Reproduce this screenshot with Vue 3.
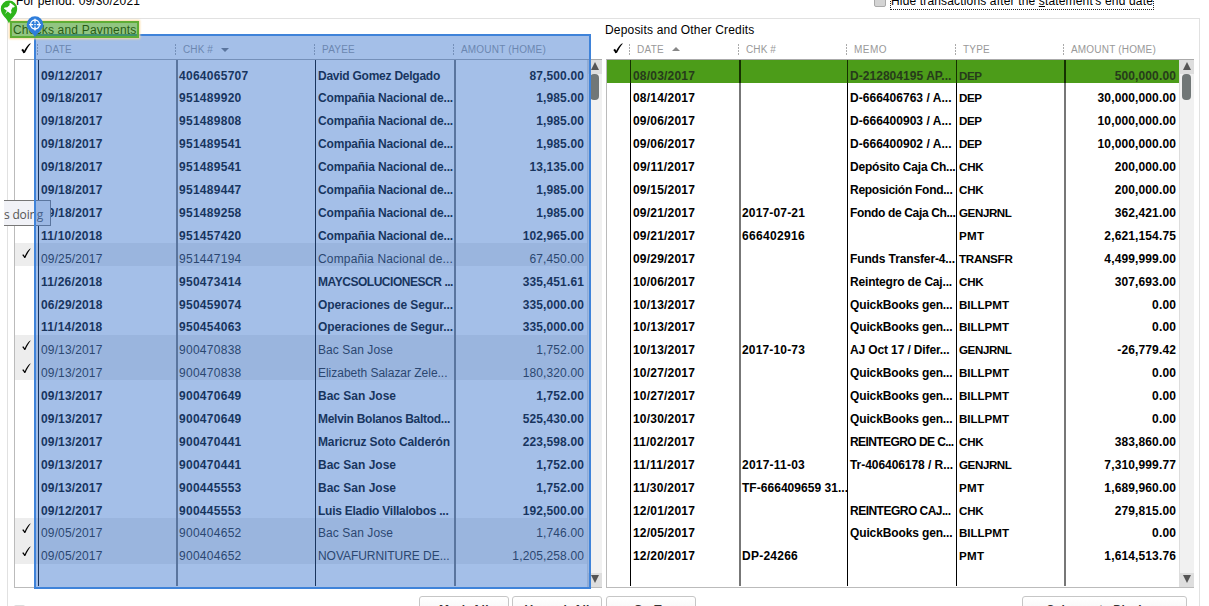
<script setup>
const fit = (el, { value }) => {
  if (!value || !el.textContent) return
  el.style.letterSpacing = '0px'
  const natural = el.getBoundingClientRect().width
  el.style.letterSpacing = (value - natural) / el.textContent.length + 'px'
}
const vFit = { mounted: fit }

// Each text column carries [text, width in px]
const payees = {
  david: ['David Gomez Delgado', 122],
  comp: ['Compañia Nacional de...', 135],
  mayc: ['MAYCSOLUCIONESCR ...', 135],
  oper: ['Operaciones de Segur...', 135],
  bac: ['Bac San Jose', 78],
  bacLight: ['Bac San Jose', 75],
  eliz: ['Elizabeth Salazar Zele...', 129.5],
  melvin: ['Melvin Bolanos Baltod...', 132],
  mari: ['Maricruz Soto Calderón', 132],
  luis: ['Luis Eladio Villalobos ...', 130.5],
  nova: ['NOVAFURNITURE DE...', 131.5],
}
const checks = [
  ['09/12/2017', '4064065707', 'david', '87,500.00'],
  ['09/18/2017', '951489920', 'comp', '1,985.00'],
  ['09/18/2017', '951489808', 'comp', '1,985.00'],
  ['09/18/2017', '951489541', 'comp', '1,985.00'],
  ['09/18/2017', '951489541', 'comp', '13,135.00'],
  ['09/18/2017', '951489447', 'comp', '1,985.00'],
  ['09/18/2017', '951489258', 'comp', '1,985.00'],
  ['11/10/2018', '951457420', 'comp', '102,965.00'],
  ['09/25/2017', '951447194', 'comp', '67,450.00', true],
  ['11/26/2018', '950473414', 'mayc', '335,451.61'],
  ['06/29/2018', '950459074', 'oper', '335,000.00'],
  ['11/14/2018', '950454063', 'oper', '335,000.00'],
  ['09/13/2017', '900470838', 'bacLight', '1,752.00', true],
  ['09/13/2017', '900470838', 'eliz', '180,320.00', true],
  ['09/13/2017', '900470649', 'bac', '1,752.00'],
  ['09/13/2017', '900470649', 'melvin', '525,430.00'],
  ['09/13/2017', '900470441', 'mari', '223,598.00'],
  ['09/13/2017', '900470441', 'bac', '1,752.00'],
  ['09/13/2017', '900445553', 'bac', '1,752.00'],
  ['09/12/2017', '900445553', 'luis', '192,500.00'],
  ['09/05/2017', '900404652', 'bacLight', '1,746.00', true],
  ['09/05/2017', '900404652', 'nova', '1,205,258.00', true],
].map(([date, chk, payee, amount, cleared]) => ({
  cleared,
  cells: [[date, 61.5], [chk, chk.length * 6.95], payees[payee]],
  amount,
}))

const typeWidth = { DEP: 22.5, CHK: 24.5, GENJRNL: 52.5, PMT: 25.5, TRANSFR: 53.5, BILLPMT: 50 }
const deposits = [
  ['08/03/2017', '', 0, 'D-212804195 AP...', 101.5, 'DEP', '500,000.00', true],
  ['08/14/2017', '', 0, 'D-666406763 / A...', 101.5, 'DEP', '30,000,000.00'],
  ['09/06/2017', '', 0, 'D-666400903 / A...', 101.5, 'DEP', '10,000,000.00'],
  ['09/06/2017', '', 0, 'D-666400902 / A...', 101.5, 'DEP', '10,000,000.00'],
  ['09/11/2017', '', 0, 'Depósito Caja Ch...', 105.5, 'CHK', '200,000.00'],
  ['09/15/2017', '', 0, 'Reposición Fond...', 102.5, 'CHK', '200,000.00'],
  ['09/21/2017', '2017-07-21', 63, 'Fondo de Caja Ch...', 105.5, 'GENJRNL', '362,421.00'],
  ['09/21/2017', '666402916', 63, '', 0, 'PMT', '2,621,154.75'],
  ['09/29/2017', '', 0, 'Funds Transfer-4...', 105, 'TRANSFR', '4,499,999.00'],
  ['10/06/2017', '', 0, 'Reintegro de Caj...', 102, 'CHK', '307,693.00'],
  ['10/13/2017', '', 0, 'QuickBooks gen...', 102.5, 'BILLPMT', '0.00'],
  ['10/13/2017', '', 0, 'QuickBooks gen...', 102.5, 'BILLPMT', '0.00'],
  ['10/13/2017', '2017-10-73', 63, 'AJ Oct 17 / Difer...', 99.5, 'GENJRNL', '-26,779.42'],
  ['10/27/2017', '', 0, 'QuickBooks gen...', 102.5, 'BILLPMT', '0.00'],
  ['10/27/2017', '', 0, 'QuickBooks gen...', 102.5, 'BILLPMT', '0.00'],
  ['10/30/2017', '', 0, 'QuickBooks gen...', 102.5, 'BILLPMT', '0.00'],
  ['11/02/2017', '', 0, 'REINTEGRO DE C...', 103.5, 'CHK', '383,860.00'],
  ['11/11/2017', '2017-11-03', 63, 'Tr-406406178 / R...', 103, 'GENJRNL', '7,310,999.77'],
  ['11/30/2017', 'TF-666409659 31...', 106, '', 0, 'PMT', '1,689,960.00'],
  ['12/01/2017', '', 0, 'REINTEGRO CAJ...', 100.5, 'CHK', '279,815.00'],
  ['12/05/2017', '', 0, 'QuickBooks gen...', 102.5, 'BILLPMT', '0.00'],
  ['12/20/2017', 'DP-24266', 56, '', 0, 'PMT', '1,614,513.76'],
].map(([date, chk, cw, memo, mw, type, amount, selected]) => ({
  selected,
  cells: [[date, 62], [chk, cw], [memo, mw], [type, typeWidth[type]]],
  amount,
}))

const ledgers = [
  {
    key: 'checks',
    title: ['Checks and Payments', 123.5],
    heads: [['DATE', 27], ['CHK #', 30, 'down'], ['PAYEE', 33], ['AMOUNT (HOME)', 85]],
    rows: checks,
  },
  {
    key: 'deposits',
    title: ['Deposits and Other Credits', 149.5],
    heads: [['DATE', 27, 'up'], ['CHK #', 30], ['MEMO', 33], ['TYPE', 27], ['AMOUNT (HOME)', 85]],
    rows: deposits,
  },
]
</script>

<template>
  <div class="screen">
    <div class="topbar">
      <span class="period"><span v-fit="124">For period: 09/30/2021</span></span>
      <span class="hide"><i class="box"></i><span class="focus"><span v-fit="262">Hide transactions after the <u>s</u>tatement's end date</span></span></span>
    </div>

    <div class="panel">
      <section v-for="l in ledgers" :key="l.key" class="ledger" :class="l.key">
        <h2><span v-fit="l.title[1]">{{ l.title[0] }}</span></h2>
        <div class="cols head">
          <div class="tickcell">
            <svg width="10" height="11" viewBox="0 0 10 11"><path d="M.3 7 2 5.800l1.200 2C4.500 4.900 6.500 2.300 9.200.3l.5.4C7.500 3.400 5.500 6.500 4 9.800L2.300 10.200C1.900 9 1.200 8 .3 7z" /></svg>
          </div>
          <div v-for="h in l.heads" :key="h[0]" class="hcell">
            <span v-fit="h[1]">{{ h[0] }}</span>
            <i v-if="h[2]" class="sort" :class="h[2]"></i>
          </div>
        </div>
        <div class="frame">
          <div class="body">
            <div v-for="(r, i) in l.rows" :key="i" class="cols row" :class="{ cleared: r.cleared, selected: r.selected }">
              <div class="tickcell">
                <svg v-if="r.cleared" width="9" height="11" viewBox="0 0 9 11"><path d="M.2 7 1.300 6.200 2.800 8.300C4 5 5.800 2.400 8.200.4l.4.4C6.700 3.400 4.800 6.600 3.500 9.700l-1.200.3C1.900 9 1.100 8 .2 7z" /></svg>
              </div>
              <div v-for="(c, j) in r.cells" :key="j" class="cell"><span v-fit="c[1]">{{ c[0] }}</span></div>
              <div class="cell amount">{{ r.amount }}</div>
            </div>
            <div class="cols row filler">
              <div></div>
              <div v-for="h in l.heads" :key="h[0]" class="cell"></div>
            </div>
          </div>
          <div class="scroll">
            <div class="arrow"><i class="up"></i></div>
            <div class="thumb"></div>
            <div class="arrow end"><i class="down"></i></div>
          </div>
        </div>
      </section>
    </div>

    <div class="footer">
      <i class="fbox"></i>
      <div class="btn mark"><span v-fit="50">Mark All</span></div>
      <div class="btn unmark"><span v-fit="65">Unmark All</span></div>
      <div class="btn goto"><span v-fit="35">Go To</span></div>
      <div class="btn columns"><span v-fit="117">Columns to Display...</span></div>
    </div>

    <div class="tip"><span v-fit="39">s doing</span></div>
    <div class="blue-area"></div>
    <div class="green-area"></div>
    <svg class="pin green" width="18" height="24" viewBox="0 0 18 24">
      <path d="M9 23.500C7.500 18.500.8 15.500.8 8.800a8.200 8.200 0 1 1 16.400 0C17.200 15.500 10.500 18.500 9 23.500z" fill="#2eb51b" />
      <g transform="rotate(38 9 9)" fill="#fff">
        <path d="M6.100 3.200h5.800v1.500l-1 .7.5 3.300 1.900 1.800v1.300H4.700v-1.300l1.900-1.800.5-3.300-1-.7z" />
        <path d="M8.400 11.500h1.200L9 15.800z" />
      </g>
    </svg>
    <svg class="pin blue" width="18" height="22" viewBox="0 0 18 22">
      <path d="M9 21.500C7.500 17 .7 14.500.7 8.600a8.300 8.300 0 1 1 16.600 0C17.300 14.500 10.500 17 9 21.500z" fill="#2f7edb" />
      <g fill="none" stroke="#fff" stroke-width="1.300">
        <circle cx="9" cy="8.600" r="4.400" />
        <path d="M9 2.700v4M9 10.500v4M3.100 8.600h4M10.900 8.600h4" />
      </g>
      <circle cx="9" cy="8.600" r=".8" fill="#fff" />
    </svg>
  </div>
</template>

<style>
html, body { margin: 0; overflow: hidden; background: #fff; }
</style>

<style scoped>
.screen {
  position: relative;
  display: flex;
  flex-direction: column;
  width: 1209px;
  height: 606px;
  overflow: hidden;
  background: #fff;
  font: 12px/14px "Liberation Sans", Arial, sans-serif;
  color: #000;
}
.screen * { box-sizing: border-box; }
.topbar, .panel, .footer { flex: none; }
span { white-space: nowrap; }
.topbar { display: flex; height: 18px; justify-content: space-between; padding: 0 55px 0 16px; }
.topbar .period { margin-top: -6px; }
.topbar .hide { margin-top: -7px; }
.hide { display: flex; gap: 4px; }
.box { width: 12px; height: 12px; margin-top: 2px; background: #d4d4d4; border: 1px solid #aaa; border-radius: 2px; }
.focus { height: 17px; border: 1px dotted #222; line-height: 15px; }
.panel {
  display: flex;
  width: 1193px;
  height: 640px;
  margin-left: 7px;
  padding-left: 7px;
  border: 1px solid #e1e1e1;
}
.checks { width: 587px; margin: 0 4px 0 -1px; --cols: 23px 138px 139px 139px 133px; }
.deposits { width: 588px; --cols: 23px 109px 108px 109px 108px 115px; }
h2 { margin: 0; height: 21px; padding-top: 4px; font-size: 12px; font-weight: 400; line-height: 14px; }
.checks h2 { margin-left: -1px; }
.cols { display: grid; grid-template-columns: var(--cols); width: 572px; }
.head { height: 19px; color: #999; font-size: 10px; }
.deposits .head { margin-left: 1px; }
.head .tickcell { padding: 3px 0 0 7px; }
.tickcell svg { display: block; fill: #000; }
.hcell {
  display: flex;
  gap: 8px;
  padding: 3px 0 0 8px;
  background: repeating-linear-gradient(#aaa 0 2px, transparent 2px 3px) 0 4px / 1px 11px no-repeat;
}
.sort { margin-top: 5px; height: 0; border: 4px solid transparent; }
.sort.down { border-top-color: #777; border-bottom: 0; }
.sort.up { margin-top: 4px; border-bottom-color: #888; border-top: 0; }
.frame { display: flex; width: 588px; height: 529px; border: 1px solid #bbb; border-top-color: #aaa; border-right: 0; }
.deposits .frame { margin-left: 1px; }
.body { width: 572px; }
.row { height: 22.9px; font-weight: 700; }
.row.filler { height: 22px; }
.row .tickcell { padding: 5px 0 0 7px; }
.cell { border-left: 1px solid #000; padding: 8.600px 0 0 2px; line-height: 14px; overflow: visible; }
.row:not(.filler) .cell { margin-bottom: -1px; }
.cell.amount { padding-right: 2px; text-align: right; letter-spacing: .13px; }
.checks .cell.amount { padding-right: 3px; }
.deposits .cell.amount { padding-right: 3px; }
.cell:last-child { border-left: 2px solid #777; }
.checks .cell:nth-child(3) { border-left: 2px solid #777; padding-left: 1px; }
.deposits .cell:nth-child(3) { border-left: 2px solid #777; padding-left: 1px; }
.deposits .cell:nth-child(5) { font-size: 11.600px; }
.cleared { background: #ededed; font-weight: 400; color: #222; }
.selected { background: #4c9c19; color: #263b1b; }
.deposits .selected .cell { border-left-color: #153000; }
.scroll { display: flex; flex-direction: column; width: 15px; background: #f1f1f1; border-left: 1px solid #ddd; }
.arrow { display: flex; height: 14px; justify-content: center; align-items: center; background: #dedede; }
.arrow i { border: 4px solid transparent; }
.arrow .up { margin-top: -2px; border-bottom: 8px solid #555; border-top: 0; }
.arrow .down { margin-top: -2px; border-top: 8px solid #555; border-bottom: 0; }
.arrow.end { margin-top: auto; }
.thumb { width: 9px; height: 26px; margin: 0 0 0 2px; border-radius: 4px; background: #717777; }
.footer { display: flex; height: 10px; margin: -62px 22px 0 14px; }
.fbox { width: 11px; height: 12px; margin: 9px 394px 0 0; flex: none; background: #ddd; border-radius: 2px; }
.btn {
  flex: none;
  height: 28px;
  border: 1px solid #c6c6c6;
  border-radius: 3px;
  padding-top: 6px;
  background: linear-gradient(#fff, #f1f1f1);
  font-weight: 700;
  text-align: center;
  color: #333;
}
.mark { width: 90px; }
.unmark { width: 90px; margin-left: 3px; }
.goto { width: 90px; margin-left: 4px; }
.columns { width: 165px; margin-left: auto; }
.tip {
  position: absolute;
  left: 4px;
  top: 200px;
  width: 47px;
  height: 26px;
  padding-top: 7px;
  border: 1px solid #777;
  border-left: 0;
  background: #f1f2f7;
  color: #555;
  font-family: "Open Sans", sans-serif;
}
.blue-area {
  position: absolute;
  left: 34px;
  top: 34px;
  width: 557px;
  height: 555px;
  border: 2px solid #3f83d9;
  background: rgba(55, 114, 204, .455);
}
.green-area {
  position: absolute;
  left: 10px;
  top: 21px;
  width: 129px;
  height: 17px;
  border: 2px solid #5fad35;
  background: rgba(66, 155, 38, .58);
  box-shadow: 0 0 2px 1px #fbd9a0;
}
.pin { position: absolute; }
.pin.green { left: 0; top: 0; }
.pin.blue { left: 26px; top: 16px; }
</style>
